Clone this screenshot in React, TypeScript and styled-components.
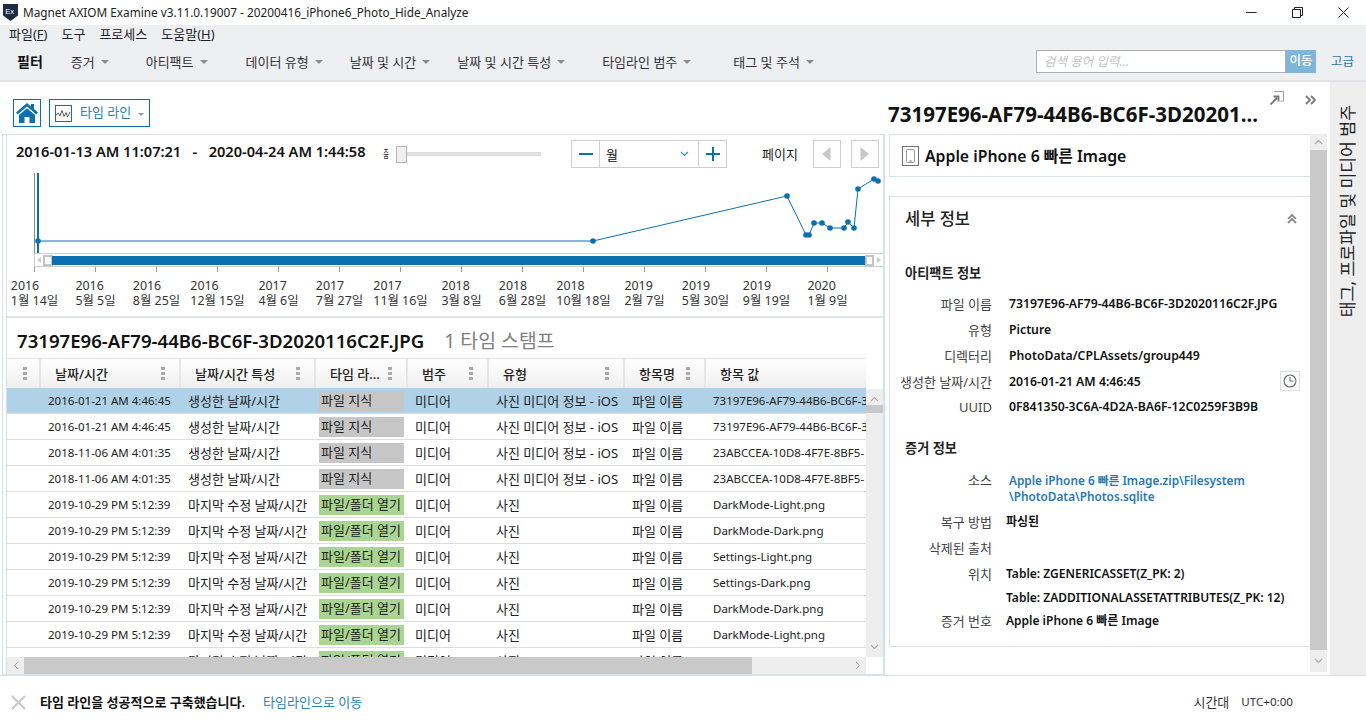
import React from "react";
import styled, { createGlobalStyle } from "styled-components";

const Global = createGlobalStyle`
  html, body { margin: 0; padding: 0; background: #fff; }
  body { font-family: "Noto Sans", "Noto Sans CJK KR", sans-serif; color: #1a1a1a; overflow: hidden; }
  * { box-sizing: border-box; }
`;

const BLUE = "#0a70b0";
const LINE = "#d8e0e8";

const Page = styled.div`
  width: 1366px; height: 728px; display: flex; flex-direction: column; overflow: hidden;
`;

/* title bar */
const TitleBar = styled.div`
  height: 25px; display: flex; align-items: center; padding-left: 3px; background: #fff; flex: none;
`;
const AppName = styled.span`
  font-size: 11.8px; line-height: 25px; margin-left: 5px; flex: 1; color: #222; white-space: nowrap;
`;
const WinButtons = styled.div`
  display: flex; width: 138px; height: 25px;
`;
const WinButton = styled.div`
  width: 46px; display: flex; align-items: center; justify-content: center;
`;

/* menu */
const MenuBar = styled.div`
  height: 18px; background: #eeeff1; display: flex; padding-left: 9px; gap: 14px; align-items: center; flex: none;
`;
const MenuItem = styled.span`
  font-size: 13px; line-height: 18px; color: #222;
  u { text-decoration: underline; }
`;
const FilterBar = styled.div`
  height: 39px; background: #eeeff1; border-bottom: 2px solid #dfe3e8; display: flex; align-items: center; padding-left: 17px; flex: none;
`;
const FilterTitle = styled.span`
  font-size: 14px; font-weight: 700; line-height: 20px; margin-right: 28px; color: #111;
`;
const FilterItem = styled.span<{ $gap: number }>`
  font-size: 13px; line-height: 18px; display: inline-flex; align-items: center; gap: 6px; margin-right: ${p => p.$gap}px; color: #333; white-space: nowrap;
`;
const Caret = styled.i`
  width: 0; height: 0; border-left: 4px solid transparent; border-right: 4px solid transparent; border-top: 4px solid #8d8d8d; display: block; margin-top: 1px;
`;
const Search = styled.div`
  margin-left: auto; display: flex; align-items: center; height: 23px; margin-right: 15px;
`;
const SearchInput = styled.div`
  width: 250px; height: 23px; border: 1px solid #aaaeb6; background: #fff; font-size: 12.5px; font-style: italic; color: #c4c4c4; padding-left: 7px; line-height: 21px;
`;
const SearchGo = styled.div`
  width: 30px; height: 23px; background: #7fb5d8; color: #fff; font-size: 12.5px; font-weight: 500; text-align: center; line-height: 22px;
`;
const Advanced = styled.span`
  font-size: 12.5px; color: #2b78ab; margin-right: 12px; line-height: 18px;
`;

/* main */
const Main = styled.div`
  height: 594px; display: flex; flex: none;
`;
const LeftCol = styled.div`
  width: 888px; flex: none; display: flex; flex-direction: column;
`;
const ViewBar = styled.div`
  height: 52px; padding: 17px 0 0 13px; display: flex; gap: 8px; flex: none;
`;
const HomeButton = styled.div`
  width: 28px; height: 28px; border: 1px solid ${BLUE}; display: flex; align-items: center; justify-content: center;
`;
const ViewSelect = styled.div`
  width: 101px; height: 28px; border: 1px solid ${BLUE}; display: flex; align-items: center; padding-left: 5px; color: #2c7fb3; font-size: 13px;
`;
const ViewLabel = styled.span`
  margin: -2px 7px 0 8px; line-height: 18px; white-space: nowrap;
`;
const SmallCaret = styled.i`
  width: 0; height: 0; border-left: 3px solid transparent; border-right: 3px solid transparent; border-top: 3px solid #999; display: block; margin-top: 3px;
`;
const LeftPane = styled.div`
  margin-left: 2px; width: 883px; height: 542px; border-left: 1px solid ${LINE}; border-top: 1px solid ${LINE}; border-right: 2px solid ${LINE}; border-bottom: 2px solid ${LINE}; padding-left: 3px; background: #fbfcfd;
`;
const PaneInner = styled.div`
  height: 100%; border-left: 1px solid ${LINE}; background: #fff; display: flex; flex-direction: column;
`;
const ChartBox = styled.div`
  height: 183px; border-bottom: 2px solid #e1e6eb; flex: none; display: flex; flex-direction: column;
`;
const ChartHead = styled.div`
  height: 38px; display: flex; align-items: center; padding-left: 9px; flex: none;
`;
const Range = styled.span`
  font-size: 14.6px; font-weight: 600; line-height: 18px; width: 365px; margin-top: -6px; color: #111; white-space: pre; flex: none;
`;
const ZoomLabel = styled.span`
  font-size: 10px; line-height: 10px; transform: scaleX(0.6); width: 10px; margin: 0 5px 0 0; color: #222; flex: none; text-align: center;
`;
const Slider = styled.div`
  width: 145px; display: flex; align-items: center; flex: none;
`;
const SliderThumb = styled.div`
  width: 11px; height: 17px; background: #f0f0f0; border: 1px solid #b5b5b5; flex: none;
`;
const SliderTrack = styled.div`
  flex: 1; height: 4px; background: #e4e4e4; border: 1px solid #dcdcdc;
`;
const Stepper = styled.div`
  margin-left: 30px; width: 156px; height: 28px; border: 1px solid #cfcfcf; display: flex; flex: none;
`;
const StepBtn = styled.div`
  width: 27px; display: flex; align-items: center; justify-content: center; flex: none;
`;
const StepSelect = styled.div`
  flex: 1; border-left: 1px solid #cfcfcf; border-right: 1px solid #cfcfcf; display: flex; align-items: center; justify-content: space-between; padding: 0 9px 0 6px; font-size: 13px; color: #111;
`;
const PageLabel = styled.span`
  font-size: 13px; margin: 0 15px 0 35px; line-height: 18px; color: #222; white-space: nowrap; flex: none;
`;
const PageBtn = styled.div`
  width: 28px; height: 28px; border: 1px solid #cfcfcf; margin: 0 10px 0 0; display: flex; align-items: center; justify-content: center; flex: none;
`;
const ChartSvg = styled.svg`
  display: block; width: 876px; height: 100px; flex: none;
`;
const AxisRow = styled.div`
  display: flex; margin-left: -3px; flex: none; height: 42px; margin-top: 5px;
`;
const AxisCol = styled.div`
  width: 61px; flex: none; display: flex; justify-content: center;
`;
const AxisLabel = styled.div`
  font-size: 12.4px; line-height: 15px; color: #333; white-space: nowrap;
`;

/* table */
const TableTitle = styled.div`
  height: 40px; flex: none; display: flex; align-items: center; padding: 5px 0 0 10px; gap: 20px;
`;
const FileTitle = styled.span`
  font-size: 18.6px; font-weight: 600; color: #111; line-height: 24px; white-space: nowrap;
`;
const StampCount = styled.span`
  font-size: 19.4px; color: #808080; line-height: 24px; white-space: nowrap;
`;
const TableGrid = styled.div`
  display: grid; grid-template-columns: 859px 17px; grid-template-rows: 30px 269px 17px; flex: none;
`;
const HeadRow = styled.div`
  display: flex; background: linear-gradient(#ffffff, #efefef); border-top: 1px solid #e2e2e2;
`;
const HeadCell = styled.div<{ $w: number }>`
  width: ${p => p.$w}px; flex: none; border-right: 2px solid #e6e6e6; display: flex; align-items: center; justify-content: space-between; padding: 0 14px 0 14px; font-size: 13px; font-weight: 500; color: #222; white-space: nowrap;
  &:first-child { padding-right: 12px; }
  &:last-child { border-right: none; }
`;
const Grip = styled.svg`
  width: 4px; height: 14px; flex: none;
`;
const TableBody = styled.div`
  overflow: hidden;
`;
const Row = styled.div<{ $sel?: boolean }>`
  height: 26px; display: flex; align-items: center; background: ${p => (p.$sel ? "#b0d2e8" : "#fff")}; border-bottom: 1px solid #dedede; white-space: nowrap; overflow: hidden;
`;
const Cell = styled.div<{ $w: number; $latin?: boolean }>`
  width: ${p => p.$w}px; flex: none; padding-left: 7px; font-size: ${p => (p.$latin ? 11.5 : 13)}px; line-height: 18px; color: #222; overflow: hidden;
`;
const PillCell = styled.div`
  width: 92px; flex: none; padding-left: 3px;
`;
const Pill = styled.div<{ $open?: boolean }>`
  width: 85px; height: 20px; background: ${p => (p.$open ? "#a9d491" : "#c6c6c6")}; font-size: 13px; line-height: 19px; padding-left: 2px; color: #222; white-space: nowrap; overflow: hidden;
`;
const VScroll = styled.div`
  background: #eeeeee; margin-top: 1px; display: flex; flex-direction: column; align-items: center; justify-content: space-between; position: relative; padding: 7px 0;
`;
const VThumb = styled.div`
  position: absolute; left: 0; right: 0; top: 16px; height: 8px; background: #c9c9c9;
`;
const HScroll = styled.div`
  background: #eeeeee; display: flex; align-items: center;
`;
const HThumb = styled.div`
  width: 728px; height: 17px; background: #c9c9c9; flex: none; margin-right: auto;
`;
const ArrowBox = styled.div`
  width: 17px; display: flex; justify-content: center; flex: none;
`;

/* right */
const RightCol = styled.div`
  width: 442px; flex: none; display: flex; flex-direction: column;
`;
const RightHead = styled.div`
  height: 52px; flex: none; display: flex; position: relative; align-items: flex-end; justify-content: space-between;
`;
const RightTitle = styled.div`
  font-size: 20.5px; font-weight: 700; color: #111; line-height: 26px; padding-bottom: 7px; white-space: nowrap;
`;
const RightIcons = styled.div`
  align-self: flex-start; display: flex; gap: 21px; padding: 9px 14px 0 0; align-items: flex-start;
`;
const RightBody = styled.div`
  display: flex; height: 540px; padding-left: 1px; flex: none;
`;
const RightScroll = styled.div`
  width: 17px; height: 538px; background: #eeeeee; display: flex; flex-direction: column; flex: none;
`;
const RThumb = styled.div`
  flex: 1; background: #c9c9c9;
`;
const RBtn = styled.div<{ $h: number }>`
  height: ${p => p.$h}px; display: flex; align-items: center; justify-content: center; flex: none;
`;
const Cards = styled.div`
  width: 421px; flex: none; display: flex; flex-direction: column; gap: 19px;
`;
const DeviceCard = styled.div`
  height: 43px; border: 1px solid ${LINE}; border-right: none; display: flex; align-items: center; padding-left: 12px; gap: 6px; flex: none;
`;
const DeviceName = styled.span`
  font-size: 15.8px; font-weight: 600; color: #111; line-height: 22px; white-space: nowrap; margin-top: 1px;
`;
const DetailCard = styled.div`
  height: 451px; border: 1px solid ${LINE}; border-right: none; flex: none; padding-left: 15px; display: flex; flex-direction: column;
`;
const DetailHead = styled.div`
  height: 43px; flex: none; display: flex; align-items: center; justify-content: space-between; padding-right: 13px;
`;
const DetailTitle = styled.span`
  font-size: 16.5px; font-weight: 500; color: #222; line-height: 22px;
`;
const SectionTitle = styled.div<{ $h: number; $pt: number }>`
  height: ${p => p.$h}px; padding-top: ${p => p.$pt}px; font-size: 13.2px; font-weight: 600; line-height: 18px; color: #222; flex: none;
`;
const DetailRow = styled.div<{ $h?: number; $gap?: number }>`
  height: ${p => p.$h ?? 26}px; display: grid; grid-template-columns: 87px 1fr; column-gap: ${p => p.$gap ?? 17}px; align-items: center; flex: none; position: relative;
`;
const Label = styled.div<{ $top?: boolean }>`
  font-size: 13px; line-height: 18px; text-align: right; color: #444; white-space: nowrap; justify-self: end; ${p => (p.$top ? "align-self: start;" : "")}
`;
const Value = styled.div<{ $small?: boolean }>`
  font-size: ${p => (p.$small ? 12 : 12.25)}px; font-weight: 600; line-height: 16px; color: #111; white-space: nowrap;
`;
const LinkValue = styled(Value)`
  color: #1f7ab5; font-size: 11.8px; font-weight: 600; align-self: start; margin-top: 1px;
`;
const ClockBtn = styled.div`
  position: absolute; right: 10px; top: 2px; width: 20px; height: 20px; border: 1px solid ${LINE}; display: flex; align-items: center; justify-content: center;
`;
const Side = styled.div`
  width: 36px; flex: none; background: #eeeeee; display: flex; justify-content: center; align-items: flex-start; padding-top: 23px;
`;
const SideText = styled.div`
  writing-mode: vertical-rl; transform: rotate(180deg); text-orientation: sideways; font-size: 17.2px; line-height: 20px; color: #222; white-space: nowrap;
`;

/* status */
const Status = styled.div`
  flex: 1; border-top: 1px solid ${LINE}; display: flex; align-items: center; padding: 0 73px 0 11px; margin-top: -1px; background: #fff; position: relative;
`;
const StatusMsg = styled.span`
  font-size: 13px; font-weight: 600; margin-left: 14px; color: #111; white-space: nowrap; line-height: 18px;
`;
const StatusLink = styled.span`
  font-size: 13px; color: #2a85bd; margin-left: 18px; white-space: nowrap; line-height: 18px;
`;
const ZoneLabel = styled.span`
  margin-left: auto; font-size: 13px; color: #333; white-space: nowrap; line-height: 18px;
`;
const ZoneValue = styled.span`
  margin-left: 12px; font-size: 11.6px; color: #333; white-space: nowrap; line-height: 18px;
`;

const GripDots = () => (
  <Grip viewBox="0 0 4 14"><rect y="0" width="4" height="3" fill="#aaa" /><rect y="5" width="4" height="3" fill="#aaa" /><rect y="10" width="4" height="3" fill="#aaa" /></Grip>
);

const columns: [string, number][] = [["", 34], ["날짜/시간", 140], ["날짜/시간 특성", 135], ["타임 라...", 92], ["범주", 81], ["유형", 136], ["항목명", 81], ["항목 값", 160]];

const F1 = "73197E96-AF79-44B6-BC6F-3D2020116C2F.JPG";
const F2 = "23ABCCEA-10D8-4F7E-8BF5-";
const I = "사진 미디어 정보 - iOS";
const D = "2019-10-29 PM 5:12:39";
const M = "마지막 수정 날짜/시간";
const C = "생성한 날짜/시간";
const rows = [
  ["2016-01-21 AM 4:46:45", C, 0, I, F1],
  ["2016-01-21 AM 4:46:45", C, 0, I, F1],
  ["2018-11-06 AM 4:01:35", C, 0, I, F2],
  ["2018-11-06 AM 4:01:35", C, 0, I, F2],
  [D, M, 1, "사진", "DarkMode-Light.png"],
  [D, M, 1, "사진", "DarkMode-Dark.png"],
  [D, M, 1, "사진", "Settings-Light.png"],
  [D, M, 1, "사진", "Settings-Dark.png"],
  [D, M, 1, "사진", "DarkMode-Dark.png"],
  [D, M, 1, "사진", "DarkMode-Light.png"],
  [D, M, 1, "사진", ""],
] as [string, string, number, string, string][];

const axis = [["2016", "1월 14일"], ["2016", "5월 5일"], ["2016", "8월 25일"], ["2016", "12월 15일"], ["2017", "4월 6일"], ["2017", "7월 27일"], ["2017", "11월 16일"], ["2018", "3월 8일"], ["2018", "6월 28일"], ["2018", "10월 18일"], ["2019", "2월 7일"], ["2019", "5월 30일"], ["2019", "9월 19일"], ["2020", "1월 9일"]];

const pts: [number, number][] = [[38, 241], [593, 241], [787, 196], [806, 235], [809, 235], [814, 223], [822, 223], [830, 228], [844, 228], [848, 222], [854, 228], [858, 189], [874, 179], [878, 181]];

const filters: [string, number][] = [["증거", 37], ["아티팩트", 38], ["데이터 유형", 27], ["날짜 및 시간", 27], ["날짜 및 시간 특성", 37], ["타임라인 범주", 42], ["태그 및 주석", 0]];

const Up = ({ c = "#a8a8a8" }: { c?: string }) => <svg width="9" height="6" viewBox="0 0 9 6"><path d="M1 5 4.5 1.5 8 5" fill="none" stroke={c} strokeWidth="1.1" /></svg>;
const Down = ({ c = "#a8a8a8" }: { c?: string }) => <svg width="9" height="6" viewBox="0 0 9 6"><path d="M1 1 4.5 4.5 8 1" fill="none" stroke={c} strokeWidth="1.1" /></svg>;

export default function App() {
  return (
    <Page>
      <Global />
      <TitleBar>
        <svg width="15" height="17" viewBox="0 0 15 17">
          <path d="M0 0H15V11.5L7.5 17 0 11.5Z" fill="#1d2c44" />
          <text x="2.2" y="9.5" fontSize="7.5" fill="#fff" fontFamily="Liberation Sans, sans-serif">Ex</text>
        </svg>
        <AppName>Magnet AXIOM Examine v3.11.0.19007 - 20200416_iPhone6_Photo_Hide_Analyze</AppName>
        <WinButtons>
          <WinButton><svg width="11" height="11" viewBox="0 0 11 11"><path d="M0 5.5H10.5" stroke="#222" /></svg></WinButton>
          <WinButton><svg width="11" height="11" viewBox="0 0 11 11"><path d="M.5 2.5H8.5V10.5H.5ZM2.5 2.5V.5H10.5V8.5H8.5" fill="none" stroke="#222" /></svg></WinButton>
          <WinButton><svg width="11" height="11" viewBox="0 0 11 11"><path d="M.5.5 10.5 10.5M10.5.5.5 10.5" stroke="#222" /></svg></WinButton>
        </WinButtons>
      </TitleBar>
      <MenuBar>
        <MenuItem>파일(<u>F</u>)</MenuItem>
        <MenuItem>도구</MenuItem>
        <MenuItem>프로세스</MenuItem>
        <MenuItem>도움말(<u>H</u>)</MenuItem>
      </MenuBar>
      <FilterBar>
        <FilterTitle>필터</FilterTitle>
        {filters.map(([t, g]) => (
          <FilterItem key={t} $gap={g}>{t}<Caret /></FilterItem>
        ))}
        <Search>
          <SearchInput>검색 용어 입력...</SearchInput>
          <SearchGo>이동</SearchGo>
        </Search>
        <Advanced>고급</Advanced>
      </FilterBar>
      <Main>
        <LeftCol>
          <ViewBar>
            <HomeButton>
              <svg width="24" height="22" viewBox="0 0 24 22">
                <path d="M12 1 1 10.5 2.6 12.4 12 4.4 21.4 12.4 23 10.5 19 7V2H16V4.5Z" fill={BLUE} />
                <path d="M4 13 12 6.2 20 13V21H14.5V15H9.5V21H4Z" fill={BLUE} />
              </svg>
            </HomeButton>
            <ViewSelect>
              <svg width="17" height="17" viewBox="0 0 17 17">
                <rect x=".5" y=".5" width="16" height="16" fill="none" stroke={BLUE} />
                <path d="M1 10 3.5 8 5 11 7 5.5 9 11.5 11 7.5 12.5 12 15 7" fill="none" stroke="#4a4a4a" strokeWidth=".9" />
              </svg>
              <ViewLabel>타임 라인</ViewLabel>
              <SmallCaret />
            </ViewSelect>
          </ViewBar>
          <LeftPane>
            <PaneInner>
              <ChartBox>
                <ChartHead>
                  <Range>2016-01-13 AM 11:07:21   -   2020-04-24 AM 1:44:58</Range>
                  <ZoomLabel>줌</ZoomLabel>
                  <Slider><SliderThumb /><SliderTrack /></Slider>
                  <Stepper>
                    <StepBtn><svg width="14" height="14" viewBox="0 0 14 14"><path d="M0 7H14" stroke={BLUE} strokeWidth="2" /></svg></StepBtn>
                    <StepSelect>월<Down c="#3a86b8" /></StepSelect>
                    <StepBtn><svg width="14" height="14" viewBox="0 0 14 14"><path d="M0 7H14M7 0V14" stroke={BLUE} strokeWidth="2" /></svg></StepBtn>
                  </Stepper>
                  <PageLabel>페이지</PageLabel>
                  <PageBtn><svg width="9" height="14" viewBox="0 0 9 14"><path d="M8.5 0V14L0 7Z" fill="#c8c8c8" /></svg></PageBtn>
                  <PageBtn><svg width="9" height="14" viewBox="0 0 9 14"><path d="M.5 0V14L9 7Z" fill="#c8c8c8" /></svg></PageBtn>
                </ChartHead>
                <ChartSvg viewBox="7 173 876 100">
                  <rect x="34" y="173" width="1" height="80" fill="#8a8a8a" />
                  <rect x="37" y="173" width="2" height="80" fill={BLUE} />
                  <polyline points={pts.map(p => p.join(",")).join(" ")} fill="none" stroke={BLUE} strokeWidth="1" />
                  {pts.map(([x, y]) => <circle key={x} cx={x} cy={y} r="2.8" fill={BLUE} />)}
                  <rect x="34.5" y="253.5" width="849" height="13" fill="#fff" stroke="#cccccc" />
                  <path d="M41 257V263L37 260Z" fill="#ccc" />
                  <rect x="44" y="256" width="8" height="9" fill="#fff" stroke="#c4c4c4" strokeWidth="2" />
                  <rect x="52" y="256" width="814" height="9" fill={BLUE} />
                  <rect x="866" y="256" width="7" height="9" fill="#fff" stroke="#c4c4c4" strokeWidth="2" />
                  <path d="M877 257V263L881 260Z" fill="#ccc" />
                  {axis.map((_, i) => <rect key={i} x={34 + i * 61} y="267" width="1" height="5" fill="#999" />)}
                </ChartSvg>
                <AxisRow>
                  {axis.map(([y, d], i) => (
                    <AxisCol key={i}><AxisLabel>{y}<br />{d}</AxisLabel></AxisCol>
                  ))}
                </AxisRow>
              </ChartBox>
              <TableTitle>
                <FileTitle>{F1}</FileTitle>
                <StampCount>1 타임 스탬프</StampCount>
              </TableTitle>
              <TableGrid>
                <HeadRow>
                  {columns.map(([t, w], i) => (
                    <HeadCell key={i} $w={w}>
                      <span>{t}</span>
                      {i < 7 ? <GripDots /> : null}
                    </HeadCell>
                  ))}
                </HeadRow>
                <div />
                <TableBody>
                  {rows.map((r, i) => (
                    <Row key={i} $sel={i === 0}>
                      <Cell $w={34} />
                      <Cell $w={140} $latin>{r[0]}</Cell>
                      <Cell $w={135}>{r[1]}</Cell>
                      <PillCell><Pill $open={r[2] === 1}>{r[2] === 1 ? "파일/폴더 열기" : "파일 지식"}</Pill></PillCell>
                      <Cell $w={81}>미디어</Cell>
                      <Cell $w={136}>{r[3]}</Cell>
                      <Cell $w={81}>파일 이름</Cell>
                      <Cell $w={160} $latin>{r[4]}</Cell>
                    </Row>
                  ))}
                </TableBody>
                <VScroll>
                  <Up /><VThumb /><Down />
                </VScroll>
                <HScroll>
                  <ArrowBox><svg width="6" height="9" viewBox="0 0 6 9"><path d="M5 1 1.5 4.5 5 8" fill="none" stroke="#a8a8a8" /></svg></ArrowBox>
                  <HThumb />
                  <ArrowBox><svg width="6" height="9" viewBox="0 0 6 9"><path d="M1 1 4.5 4.5 1 8" fill="none" stroke="#a8a8a8" /></svg></ArrowBox>
                </HScroll>
                <div />
              </TableGrid>
            </PaneInner>
          </LeftPane>
        </LeftCol>
        <RightCol>
          <RightHead>
            <RightTitle>73197E96-AF79-44B6-BC6F-3D20201...</RightTitle>
            <RightIcons>
              <svg width="14" height="14" viewBox="0 0 14 14">
                <path d="M4 .5H13.5V10H10.5" fill="none" stroke="#9a9a9a" />
                <path d="M.5 13.5 7 7M3.5 5.5H8.5V10.5" fill="none" stroke="#777" strokeWidth="1.8" />
              </svg>
              <svg width="11" height="10" viewBox="0 0 11 10" style={{ marginTop: 4 }}>
                <path d="M1 1 5 5 1 9M6 1 10 5 6 9" fill="none" stroke="#7a7a7a" strokeWidth="1.8" />
              </svg>
            </RightIcons>
          </RightHead>
          <RightBody>
            <Cards>
              <DeviceCard>
                <svg width="17" height="20" viewBox="0 0 17 20">
                  <rect x=".5" y=".5" width="16" height="19" fill="none" stroke="#6f6f6f" />
                  <rect x="4.5" y="3.5" width="8" height="13" rx="1" fill="none" stroke="#9a9a9a" />
                  <rect x="7.5" y="14.5" width="2" height="1" fill="#555" />
                </svg>
                <DeviceName>Apple iPhone 6 빠른 Image</DeviceName>
              </DeviceCard>
              <DetailCard>
                <DetailHead>
                  <DetailTitle>세부 정보</DetailTitle>
                  <svg width="10" height="10" viewBox="0 0 10 10"><path d="M1 5 5 1 9 5M1 9 5 5 9 9" fill="none" stroke="#7a7a7a" strokeWidth="1.6" /></svg>
                </DetailHead>
                <SectionTitle $h={51} $pt={24}>아티팩트 정보</SectionTitle>
                <DetailRow><Label>파일 이름</Label><Value>{F1}</Value></DetailRow>
                <DetailRow><Label>유형</Label><Value>Picture</Value></DetailRow>
                <DetailRow><Label>디렉터리</Label><Value>PhotoData/CPLAssets/group449</Value></DetailRow>
                <DetailRow $h={25}>
                  <Label>생성한 날짜/시간</Label><Value>2016-01-21 AM 4:46:45</Value>
                  <ClockBtn>
                    <svg width="14" height="14" viewBox="0 0 14 14"><circle cx="7" cy="7" r="6" fill="none" stroke="#666" strokeWidth="1.1" /><path d="M7 3V7H10.5" fill="none" stroke="#666" /></svg>
                  </ClockBtn>
                </DetailRow>
                <DetailRow><Label>UUID</Label><Value>0F841350-3C6A-4D2A-BA6F-12C0259F3B9B</Value></DetailRow>
                <SectionTitle $h={51} $pt={19}>증거 정보</SectionTitle>
                <DetailRow $h={38}><Label $top>소스</Label><LinkValue>Apple iPhone 6 빠른 Image.zip\Filesystem<br />\PhotoData\Photos.sqlite</LinkValue></DetailRow>
                <DetailRow $gap={14}><Label>복구 방법</Label><Value $small>파싱된</Value></DetailRow>
                <DetailRow $gap={14}><Label>삭제된 출처</Label><Value /></DetailRow>
                <DetailRow $gap={14}><Label>위치</Label><Value $small>Table: ZGENERICASSET(Z_PK: 2)</Value></DetailRow>
                <DetailRow $gap={14} $h={22}><Label /><Value $small>Table: ZADDITIONALASSETATTRIBUTES(Z_PK: 12)</Value></DetailRow>
                <DetailRow $gap={14} $h={24}><Label>증거 번호</Label><Value $small>Apple iPhone 6 빠른 Image</Value></DetailRow>
              </DetailCard>
            </Cards>
            <RightScroll>
              <RBtn $h={16}><Up /></RBtn>
              <RThumb />
              <RBtn $h={22}><Down /></RBtn>
            </RightScroll>
          </RightBody>
        </RightCol>
        <Side><SideText>태그, 프로파일 및 미디어 범주</SideText></Side>
      </Main>
      <Status>
        <svg width="15" height="15" viewBox="0 0 15 15"><path d="M1 1 14 14M14 1 1 14" stroke="#c9c9c9" strokeWidth="2.2" /></svg>
        <StatusMsg>타임 라인을 성공적으로 구축했습니다.</StatusMsg>
        <StatusLink>타임라인으로 이동</StatusLink>
        <ZoneLabel>시간대</ZoneLabel>
        <ZoneValue>UTC+0:00</ZoneValue>
      </Status>
    </Page>
  );
}
